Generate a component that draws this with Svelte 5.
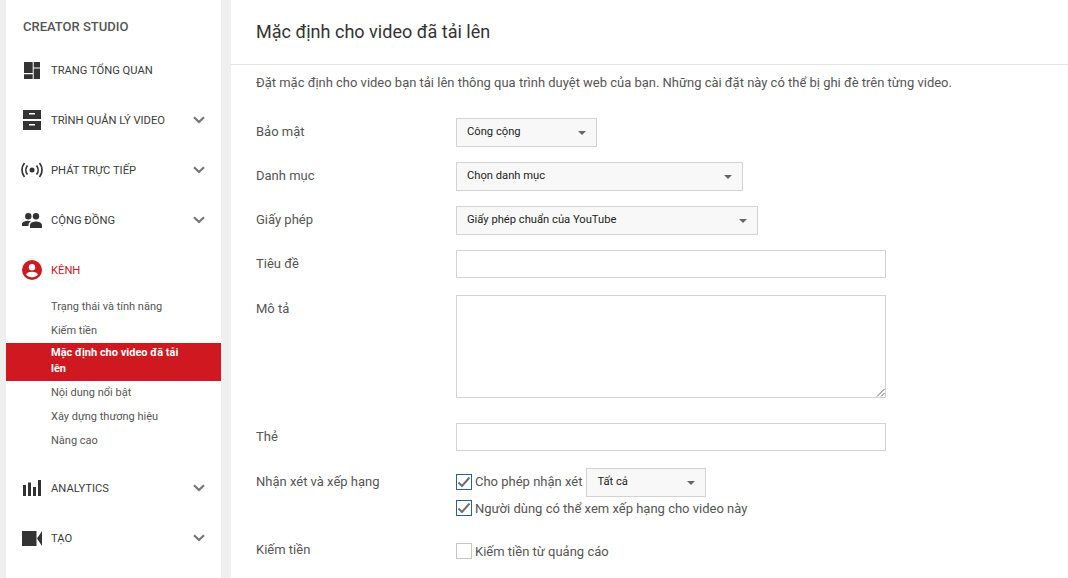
<script>
  const subItems = [
    { label: "Trạng thái và tính năng" },
    { label: "Kiếm tiền" },
    { label: "Mặc định cho video đã tải lên", active: true },
    { label: "Nội dung nổi bật" },
    { label: "Xây dựng thương hiệu" },
    { label: "Nâng cao" }
  ];
</script>

{#snippet chevron()}
  <svg class="chev" width="12" height="8" viewBox="0 0 12 8"><path d="M1 1.2 6 6l5-4.800" fill="none" stroke="#767676" stroke-width="2.200"/></svg>
{/snippet}

{#snippet caret()}
  <span class="caret"></span>
{/snippet}

{#snippet tick()}
  <svg width="14" height="12" viewBox="0 0 14 12" fill="none" stroke="#707070" stroke-width="2"><path d="M1.500 6.500 5 10l7.500-8.500"/></svg>
{/snippet}

<div class="page">
  <aside class="side">
    <h2>CREATOR STUDIO</h2>
    <nav>
      <div class="item">
        <span class="ico">
          <svg width="16" height="17" viewBox="0 0 16 17" fill="#333"><path d="M0 0h8.700v11H0zM9.700 0H16v5.500H9.700zM9.700 6.500H16V17H9.700zM0 12.200h8.700V17H0z"/></svg>
        </span>
        <span class="lbl">TRANG TỔNG QUAN</span>
      </div>
      <div class="item">
        <span class="ico">
          <svg width="18" height="20" viewBox="0 0 18 20" fill="#333"><path fill-rule="evenodd" d="M0 0h18v9H0zM6 3v1.500h6V3zM0 11h18v9H0zM6 14v1.500h6V14z"/></svg>
        </span>
        <span class="lbl">TRÌNH QUẢN LÝ VIDEO</span>
        {@render chevron()}
      </div>
      <div class="item">
        <span class="ico">
          <svg width="22" height="16" viewBox="0 0 22 16" fill="none" stroke="#333" stroke-width="1.700"><circle cx="11" cy="8" r="2.500" fill="#333" stroke="none"/><path d="M6.500 3.500a7 7 0 0 0 0 9M15.500 3.500a7 7 0 0 1 0 9M3.500 1a11 11 0 0 0 0 14M18.500 1a11 11 0 0 1 0 14"/></svg>
        </span>
        <span class="lbl">PHÁT TRỰC TIẾP</span>
        {@render chevron()}
      </div>
      <div class="item">
        <span class="ico">
          <svg width="20" height="15" viewBox="0 0 20 15" fill="#333"><circle cx="6.300" cy="3.300" r="3.200"/><circle cx="14" cy="3.300" r="3.200"/><path d="M0 13v-1.800C0 9 3.500 7.800 6 7.800c1 0 2 .2 3 .5C7.500 9.200 6.500 10.300 6.500 11.800V13zM8 15v-3c0-2.400 3.800-3.500 6-3.500s6 1.100 6 3.500v3z"/></svg>
        </span>
        <span class="lbl">CỘNG ĐỒNG</span>
        {@render chevron()}
      </div>
      <div class="item current">
        <span class="ico">
          <svg width="20" height="20" viewBox="0 0 20 20"><circle cx="10" cy="10" r="10" fill="#cf1820"/><circle cx="10" cy="7.300" r="3.200" fill="#fff"/><path d="M4 14.600C4.800 12.500 8 11.800 10 11.800s5.200.7 6 2.800c-1.300 1.700-3.500 2.800-6 2.800s-4.700-1.100-6-2.800z" fill="#fff"/></svg>
        </span>
        <span class="lbl">KÊNH</span>
      </div>
      <ul class="sub">
        {#each subItems as s}
          <li class:active={s.active}>{s.label}</li>
        {/each}
      </ul>
      <div class="item analytics">
        <span class="ico">
          <svg width="18" height="16" viewBox="0 0 18 16" fill="#333"><path d="M0 5h3v11H0zM5 2.500h3V16H5zM10 7h3v9h-3zM15 0h3v16h-3z"/></svg>
        </span>
        <span class="lbl">ANALYTICS</span>
        {@render chevron()}
      </div>
      <div class="item">
        <span class="ico">
          <svg width="20" height="15" viewBox="0 0 20 15" fill="#333"><path d="M0 0h14.500v15H0zM15 7.500 20 0v15z"/></svg>
        </span>
        <span class="lbl">TẠO</span>
        {@render chevron()}
      </div>
    </nav>
  </aside>

  <main class="content">
    <header><h1>Mặc định cho video đã tải lên</h1></header>
    <div class="body">
      <p class="intro">Đặt mặc định cho video bạn tải lên thông qua trình duyệt web của bạn. Những cài đặt này có thể bị ghi đè trên từng video.</p>

      <div class="form">
        <div class="row sel-row">
          <span class="key">Bảo mật</span>
          <div class="select w141">Công cộng {@render caret()}</div>
        </div>
        <div class="row sel-row">
          <span class="key">Danh mục</span>
          <div class="select w287">Chọn danh mục {@render caret()}</div>
        </div>
        <div class="row sel-row">
          <span class="key">Giấy phép</span>
          <div class="select w302">Giấy phép chuẩn của YouTube {@render caret()}</div>
        </div>
        <div class="row in-row">
          <span class="key">Tiêu đề</span>
          <div class="input"></div>
        </div>
        <div class="row area-row">
          <span class="key">Mô tả</span>
          <div class="input area">
            <svg class="grip" width="9" height="9" viewBox="0 0 9 9" stroke="#666" fill="none"><path d="M1 8.500 8.500 1M5 8.500 8.500 5"/></svg>
          </div>
        </div>
        <div class="row in-row">
          <span class="key">Thẻ</span>
          <div class="input"></div>
        </div>
        <div class="row comments">
          <span class="key">Nhận xét và xếp hạng</span>
          <div class="checks">
            <div class="check-line first">
              <span class="box on">{@render tick()}</span>
              <span>Cho phép nhận xét</span>
              <div class="select w120">Tất cả {@render caret()}</div>
            </div>
            <div class="check-line">
              <span class="box on">{@render tick()}</span>
              <span>Người dùng có thể xem xếp hạng cho video này</span>
            </div>
          </div>
        </div>
        <div class="row money">
          <span class="key">Kiếm tiền</span>
          <div class="check-line">
            <span class="box"></span>
            <span>Kiếm tiền từ quảng cáo</span>
          </div>
        </div>
      </div>
    </div>
  </main>
</div>

<style>
  :global(body) {
    background: #efefef;
    overflow: hidden;
  }

  .page {
    display: flex;
    height: 578px;
    padding-left: 6px;
    overflow: hidden;
    font-family: Roboto, "Liberation Sans", sans-serif;
  }

  .side {
    width: 215px;
    flex: none;
    background: #fff;
    margin-right: 10px;
  }

  h2 {
    margin: 0;
    padding: 19px 0 0 17px;
    height: 45px;
    box-sizing: border-box;
    font-size: 13px;
    line-height: 16px;
    font-weight: 500;
    color: #555;
  }

  .item {
    display: flex;
    align-items: center;
    height: 50px;
    font-size: 11.200px;
  }

  .ico {
    box-sizing: border-box;
    width: 45px;
    flex: none;
    display: flex;
    justify-content: center;
    padding: 0 9px 0 16px;
  }

  .ico svg {
    flex: none;
  }

  .lbl {
    flex: 1;
    color: #3c3c3c;
  }

  .current .lbl {
    color: #cc181e;
  }

  .chev {
    margin-right: 16px;
  }

  .sub {
    list-style: none;
    margin: -1px 0 0;
    padding: 0;
    font-size: 11px;
    color: #555;
  }

  .sub li {
    box-sizing: border-box;
    height: 24px;
    padding: 6px 30px 4px 45px;
    line-height: 14px;
  }

  .sub li.active {
    height: 38px;
    margin: 1px 0 -1px;
    padding-top: 2px;
    padding-bottom: 2px;
    line-height: 16px;
    background: #cf1820;
    color: #fff;
    font-weight: 700;
  }

  .analytics {
    margin-top: 11px;
  }

  .content {
    flex: 1;
    background: #fff;
    min-width: 0;
  }

  header {
    height: 65px;
    box-sizing: border-box;
    border-bottom: 1px solid #e4e4e4;
    padding: 21px 25px 0;
  }

  h1 {
    margin: 0;
    font-size: 18.040px;
    line-height: 22px;
    font-weight: 400;
    color: #333;
  }

  .body {
    padding: 0 25px;
  }

  .intro {
    margin: 0;
    padding-top: 10px;
    height: 53px;
    box-sizing: border-box;
    font-size: 12.980px;
    line-height: 16px;
    color: #555;
  }

  .row {
    display: flex;
    align-items: flex-start;
    font-size: 13px;
    color: #555;
  }

  .key {
    width: 200px;
    flex: none;
    padding-top: 6px;
    line-height: 16px;
  }

  .sel-row {
    height: 44px;
  }

  .select {
    position: relative;
    box-sizing: border-box;
    height: 29px;
    padding: 0 10px;
    border: 1px solid #d3d3d3;
    background: #f8f8f8;
    font-size: 11.200px;
    line-height: 25px;
    color: #222;
  }

  .caret {
    position: absolute;
    right: 10px;
    top: 12px;
    width: 0;
    height: 0;
    border: 4px solid transparent;
    border-top: 4px solid #666;
    border-bottom: 0;
  }

  .w141 { width: 141px; }
  .w287 { width: 287px; }
  .w302 { width: 302px; }
  .w120 { width: 120px; }

  .input {
    position: relative;
    box-sizing: border-box;
    width: 430px;
    height: 28px;
    border: 1px solid #d3d3d3;
    background: #fff;
  }

  .in-row {
    height: 45px;
  }

  .area-row {
    height: 128px;
  }

  .input.area {
    height: 103px;
  }

  .grip {
    position: absolute;
    right: 0;
    bottom: 0;
  }

  .comments {
    height: 68px;
  }

  .check-line {
    display: flex;
    align-items: center;
    gap: 3px;
    height: 24px;
    color: #555;
  }

  .check-line.first {
    box-sizing: border-box;
    height: 29px;
    padding-bottom: 2px;
    margin-bottom: -1px;
  }

  .check-line.first .select {
    margin: 0 0 -2px 1px;
  }

  .box {
    display: flex;
    align-items: center;
    justify-content: center;
    box-sizing: border-box;
    width: 16px;
    height: 16px;
    border: 1px solid #c6c6c6;
    background: #fff;
  }

  .box.on {
    border-color: #2a5f9e;
  }

  .money {
    margin-top: 3px;
  }

  .money .key {
    padding-top: 3px;
  }
</style>
